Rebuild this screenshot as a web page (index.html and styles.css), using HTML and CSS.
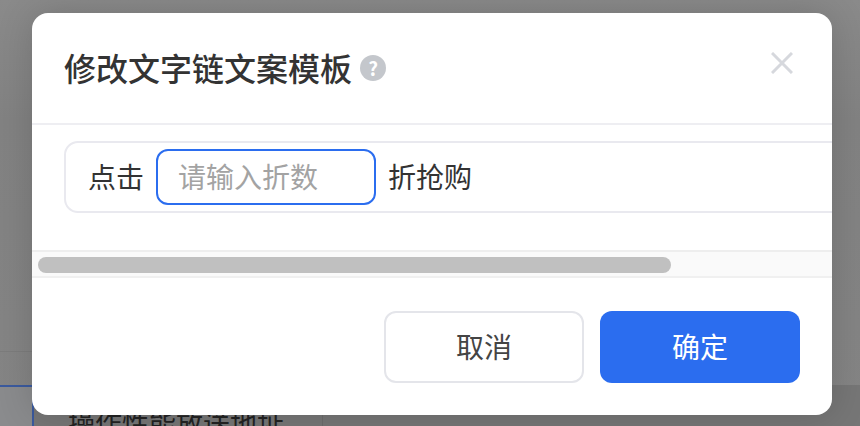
FILE: index.html
```html
<!DOCTYPE html>
<html lang="zh-CN">
<head>
  <meta charset="UTF-8">
  <title>修改文字链文案模板</title>
  <link rel="stylesheet" href="styles.css">
</head>
<body>
  <div class="page">
    <div class="page-line"></div>
    <div class="page-tab">
      <div class="page-cell">操作性能放送地址</div>
    </div>
  </div>

  <div class="modal">
    <div class="modal-header">
      <h2 class="modal-title">修改文字链文案模板</h2>
      <span class="help-icon">?</span>
      <svg class="close-icon" viewBox="0 0 22 22" width="22" height="22">
        <path d="M1 1L21 21M21 1L1 21" fill="none" stroke="#d6d8dd" stroke-width="3"/>
      </svg>
    </div>

    <div class="modal-body">
      <div class="link-row">
        <span class="link-text">点击</span>
        <input class="link-input" type="text" placeholder="请输入折数">
        <span class="link-text">折抢购</span>
      </div>
    </div>

    <div class="scroll-track">
      <div class="scroll-thumb"></div>
    </div>

    <div class="modal-footer">
      <button class="btn">取消</button>
      <button class="btn btn-primary">确定</button>
    </div>
  </div>
</body>
</html>
```

FILE: styles.css
```css
html, body {
  margin: 0;
  height: 100%;
}
body {
  position: relative;
  overflow: hidden;
  background: #777;
  font-family: "Noto Sans CJK SC", "Liberation Sans", sans-serif;
  color: #333;
}
.page {
  display: flex;
  flex-direction: column;
  height: 100%;
  background: linear-gradient(#8a8a8a 0, #828282 120px, #858585 100%);
}
.page-line {
  margin-top: 351px;
  width: 40px;
  height: 1px;
  background: #7c7c7c;
}
.page-tab {
  margin-top: 33px;
  flex: 1;
  min-height: 0;
  background: linear-gradient(90deg, #8a8b8d 0, #8a8b8d 32px, #767676 34px);
}
.page-tab::before {
  content: "";
  display: block;
  width: 34px;
  height: 2px;
  background: #3b5a9e;
}
.page-cell {
  height: 100%;
  box-sizing: border-box;
  margin-left: 32px;
  padding: 16px 0 0 34px;
  width: 291px;
  border-left: 2px solid #3b5a9e;
  border-right: 1px solid #6c6c6c;
  font-size: 27px;
  line-height: 40px;
  color: #222;
}
.modal {
  position: absolute;
  left: 32px;
  top: 13px;
  width: 800px;
  height: 402px;
  display: flex;
  flex-direction: column;
  overflow: hidden;
  background: #fff;
  border-radius: 16px;
  box-shadow: 0 0 36px rgba(0, 0, 0, 0.16);
}
.modal-header {
  position: relative;
  display: flex;
  align-items: center;
  gap: 8px;
  height: 110px;
  padding-left: 32px;
  border-bottom: 2px solid #eeeef2;
  flex-shrink: 0;
}
.modal-title {
  margin: 0 0 2px;
  font-size: 32px;
  font-weight: 500;
  line-height: 44px;
  color: #333;
}
.help-icon {
  width: 26px;
  height: 26px;
  border-radius: 50%;
  background: #c4c7cc;
  color: #fff;
  font-size: 19px;
  font-weight: 700;
  line-height: 26px;
  text-align: center;
}
.close-icon {
  position: absolute;
  left: 739px;
  top: 39px;
}
.modal-body {
  flex: 1;
  padding: 16px 0 0 32px;
  overflow: hidden;
}
.link-row {
  display: flex;
  align-items: center;
  gap: 12px;
  width: 900px;
  height: 72px;
  box-sizing: border-box;
  padding-left: 22px;
  border: 2px solid #e9e9ef;
  border-radius: 14px;
  font-size: 28px;
}
.link-text {
  padding-bottom: 2px;
}
.link-input {
  width: 220px;
  height: 56px;
  box-sizing: border-box;
  padding: 0 0 2px 20px;
  border: 2px solid #2b6def;
  border-radius: 12px;
  outline: none;
  font: inherit;
  color: #333;
}
.link-input::placeholder {
  color: #a3a3a3;
}
.scroll-track {
  height: 28px;
  box-sizing: border-box;
  padding: 5px 0 0 6px;
  background: #fafafa;
  border-top: 2px solid #eeeeee;
  border-bottom: 2px solid #f0f0f0;
  flex-shrink: 0;
}
.scroll-thumb {
  width: 633px;
  height: 16px;
  border-radius: 8px;
  background: #c0c0c0;
}
.modal-footer {
  display: flex;
  justify-content: flex-end;
  gap: 16px;
  padding: 33px 32px 32px;
  flex-shrink: 0;
}
.btn {
  width: 200px;
  height: 72px;
  padding: 0 0 2px;
  border: 2px solid #e4e5ea;
  border-radius: 12px;
  background: #fff;
  font: inherit;
  font-size: 28px;
  color: #444;
}
.btn-primary {
  border: none;
  background: #2b6def;
  color: #fff;
}
```
